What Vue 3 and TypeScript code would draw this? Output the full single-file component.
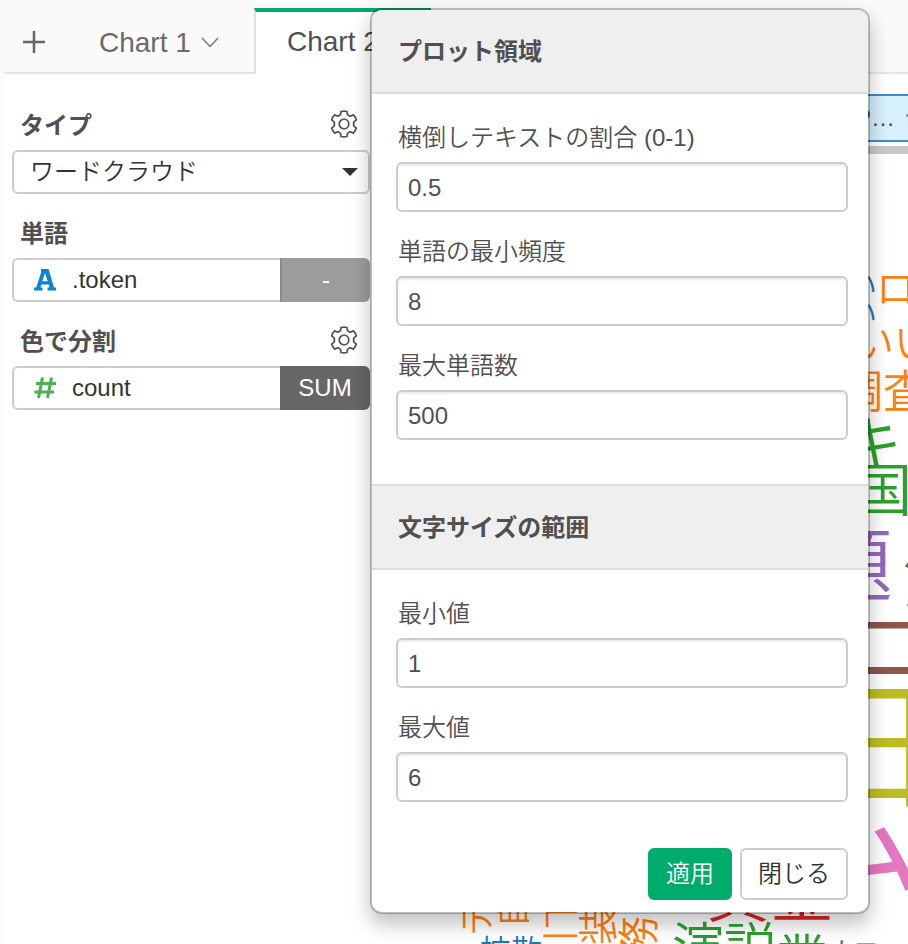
<script setup lang="ts">
import { ref } from 'vue'

interface Word {
  text: string
  x: number
  y: number
  size: number
  color: string
  turned?: boolean
}

interface Field {
  id: string
  label: string
  value: string
}

const chartType = ref('wordcloud')

const plotFields = ref<Field[]>([
  { id: 'rotate-ratio', label: '横倒しテキストの割合 (0-1)', value: '0.5' },
  { id: 'min-freq', label: '単語の最小頻度', value: '8' },
  { id: 'max-words', label: '最大単語数', value: '500' },
])

const sizeFields = ref<Field[]>([
  { id: 'size-min', label: '最小値', value: '1' },
  { id: 'size-max', label: '最大値', value: '6' },
])

const blue = '#1f77b4'
const orange = '#ff7f0e'
const green = '#2ca02c'
const purple = '#9467bd'
const brown = '#8c564b'
const olive = '#bcbd22'
const pink = '#e377c2'
const red = '#d62728'

// Baseline positions inside the chart canvas.
const words: Word[] = [
  { text: 'い', x: 477, y: 142, size: 30, color: blue },
  { text: 'い', x: 477, y: 170, size: 30, color: blue },
  { text: 'ロ', x: 506, y: 149, size: 40, color: orange },
  { text: 'いい', x: 484, y: 203, size: 40, color: orange },
  { text: '調査', x: 468, y: 254, size: 45, color: orange },
  { text: 'キ', x: 472, y: 312, size: 60, color: green },
  { text: '国', x: 484, y: 357, size: 58, color: green },
  { text: '題', x: 443, y: 440, size: 80, color: purple },
  { text: '済', x: 532, y: 449, size: 72, color: brown },
  { text: 'ニ', x: 476, y: 526, size: 90, color: brown },
  { text: '日', x: 430, y: 643, size: 140, color: olive },
  { text: 'ム', x: 412, y: 732, size: 144, color: pink },
  { text: 'テ', x: 120, y: 782, size: 36, color: orange, turned: true },
  { text: '自', x: 156, y: 774, size: 36, color: orange, turned: true },
  { text: '引下', x: 204, y: 811, size: 36, color: orange, turned: true },
  { text: '装', x: 243, y: 791, size: 40, color: orange, turned: true },
  { text: '務', x: 284, y: 804, size: 42, color: orange, turned: true },
  { text: '拡散', x: 110, y: 808, size: 31, color: blue },
  { text: '資金', x: 336, y: 762, size: 64, color: red },
  { text: '演説', x: 302, y: 812, size: 52, color: green },
  { text: '業', x: 406, y: 824, size: 52, color: green },
  { text: 'た', x: 460, y: 810, size: 30, color: blue },
  { text: '一', x: 486, y: 798, size: 20, color: pink },
]
</script>

<template>
  <div class="page">
    <header class="tabs">
      <button class="add" type="button" aria-label="+">
        <svg width="22" height="22" viewBox="0 0 22 22"><path d="M11 0v22M0 11h22" stroke="#666" stroke-width="2.500" /></svg>
      </button>
      <button class="tab" type="button">
        <span>Chart 1</span>
        <svg width="18" height="12" viewBox="0 0 18 12"><path d="M1 1l8 8.500 8-8.500" fill="none" stroke="#777" stroke-width="1.500" /></svg>
      </button>
      <button class="tab active" type="button"><span>Chart 2</span></button>
      <div class="rest"></div>
    </header>

    <div class="body">
      <aside class="side">
        <div class="title">
          <label for="chart-type">タイプ</label>
          <button class="gear" type="button" aria-label="タイプ">
            <svg width="28" height="28" viewBox="0 0 28 28"><use href="#gear" /></svg>
          </button>
        </div>
        <div class="pick">
          <select id="chart-type" v-model="chartType">
            <option value="wordcloud">ワードクラウド</option>
          </select>
          <svg class="caret" width="16" height="8" viewBox="0 0 16 8"><path d="M0 0h16L8 8z" fill="#333" /></svg>
        </div>

        <div class="title"><h2>単語</h2></div>
        <div class="column">
          <button class="name" type="button">
            <svg width="22" height="22" viewBox="0 0 22 22">
              <path d="M7 0h7.500L20 18.500h2V21.500h-8.500V18.500h2L14.700 15.500H7.300L6.500 18.500h2V21.500H0V18.500H2.200L7.400 2.800H7zM8.300 12.300h5.400L11 4z" fill="#0a84d6" fill-rule="evenodd" />
            </svg>
            <span>.token</span>
          </button>
          <button class="agg muted" type="button">-</button>
        </div>

        <div class="title">
          <h2>色で分割</h2>
          <button class="gear" type="button" aria-label="色で分割">
            <svg width="28" height="28" viewBox="0 0 28 28">
              <path id="gear" d="M11 1.500q3-.8 6 0l.5 3.300 2.600 1.500 3.200-1.400q2.200 2 3 5l-2.600 2.200v3.800l2.600 2.200q-.8 3-3 5l-3.200-1.400-2.600 1.500-.5 3.300q-3 .8-6 0l-.5-3.300-2.600-1.500-3.200 1.400q-2.200-2-3-5l2.600-2.200v-3.800L1.700 9.900q.8-3 3-5l3.200 1.400 2.600-1.500zM14 9.200a4.800 4.800 0 1 0 0 9.600 4.800 4.800 0 0 0 0-9.600z" fill="none" stroke="#555" stroke-width="1.800" stroke-linejoin="round" />
            </svg>
          </button>
        </div>
        <div class="column">
          <button class="name" type="button">
            <svg width="22" height="22" viewBox="0 0 22 22"><path d="M8.500 0.500L4.500 21M17.500 0.500l-4 20.500M2 6.500h20M.5 15H20" fill="none" stroke="#4caf50" stroke-width="3" /></svg>
            <span>count</span>
          </button>
          <button class="agg" type="button">SUM</button>
        </div>
      </aside>

      <main class="chart">
        <div class="pin"><span>P…</span><span>↑</span></div>
        <div class="bar"></div>
        <svg class="cloud" role="img">
          <text
            v-for="(w, i) in words"
            :key="i"
            :transform="`translate(${w.x} ${w.y})${w.turned ? ' rotate(-90)' : ''}`"
            :font-size="w.size"
            :fill="w.color"
          >{{ w.text }}</text>
        </svg>
      </main>
    </div>

    <form class="dialog" @submit.prevent>
      <h3>プロット領域</h3>
      <div class="fields">
        <div v-for="f in plotFields" :key="f.id" class="field">
          <label :for="f.id">{{ f.label }}</label>
          <input :id="f.id" v-model="f.value" type="text" />
        </div>
      </div>
      <h3 class="second">文字サイズの範囲</h3>
      <div class="fields">
        <div v-for="f in sizeFields" :key="f.id" class="field">
          <label :for="f.id">{{ f.label }}</label>
          <input :id="f.id" v-model="f.value" type="text" />
        </div>
      </div>
      <div class="actions">
        <button class="apply" type="submit">適用</button>
        <button class="close" type="button">閉じる</button>
      </div>
    </form>
  </div>
</template>

<style>
body {
  background: #fafafa;
}
</style>

<style scoped>
.page,
.page * {
  box-sizing: border-box;
}
.page {
  position: relative;
  display: flex;
  flex-direction: column;
  height: 100vh;
  min-height: 926px;
  padding-left: 4px;
  overflow: hidden;
  color: #505050;
  font-family: 'Liberation Sans', 'Noto Sans CJK JP', sans-serif;
  font-size: 24px;
}
button,
input,
select {
  font: inherit;
  color: inherit;
  margin: 0;
}
button {
  display: flex;
  align-items: center;
  border: 0;
  padding: 0;
  background: none;
}
h2,
h3 {
  margin: 0;
  font-size: 24px;
}
.tabs {
  display: flex;
  height: 74px;
  padding-top: 8px;
}
.add {
  width: 60px;
  padding-top: 4px;
  justify-content: center;
  border-bottom: 2px solid #e6e6e6;
}
.tab {
  gap: 10px;
  width: 190px;
  padding: 6px 0 0 35px;
  font-size: 28px;
  color: #6a6a6a;
  border-bottom: 2px solid #e6e6e6;
}
.tab.active {
  width: 177px;
  padding: 0 0 2px 31px;
  color: #505050;
  background: #fff;
  border-left: 2px solid #e0e0e0;
  border-top: 4px solid #00ac6b;
  border-bottom: 0;
}
.rest {
  flex: 1;
  border-bottom: 2px solid #e6e6e6;
}
.body {
  flex: 1;
  display: flex;
  min-height: 0;
  background: #fff;
}
.side {
  width: 366px;
  padding: 24px 0 0 8px;
}
.title {
  display: flex;
  align-items: center;
  justify-content: space-between;
  height: 52px;
  padding: 0 12px 0 8px;
  font-weight: 700;
  line-height: 32px;
}
.title label,
.title h2 {
  padding-top: 4px;
}
.pick {
  position: relative;
  margin-bottom: 12px;
}
.pick select {
  display: block;
  appearance: none;
  width: 100%;
  height: 44px;
  padding: 0 40px 2px 16px;
  color: #333;
  font-weight: 350;
  background: #fff;
  border: 2px solid #ccc;
  border-radius: 6px;
}
.caret {
  position: absolute;
  right: 12px;
  top: 18px;
}
.column {
  display: flex;
  height: 44px;
  margin-bottom: 12px;
}
.name {
  flex: 1;
  gap: 16px;
  padding-left: 20px;
  color: #333;
  background: #fff;
  border: 2px solid #ccc;
  border-right: 0;
  border-radius: 6px 0 0 6px;
}
.agg {
  width: 90px;
  justify-content: center;
  color: #fff;
  background: #666;
  border-radius: 0 6px 6px 0;
}
.agg.muted {
  background: #9c9c9c;
  border-left: 2px solid #8a8a8a;
}
.chart {
  flex: 1;
  display: flex;
  flex-direction: column;
  min-width: 0;
  padding-top: 20px;
  overflow: hidden;
}
.pin {
  display: flex;
  gap: 8px;
  height: 48px;
  margin-left: 4px;
  padding-left: 479px;
  align-items: center;
  color: #444;
  white-space: nowrap;
  background: #d6f0fc;
  border: 2px solid #428bca;
  border-right: 0;
}
.bar {
  height: 8px;
  margin: 4px 0 0 4px;
  background: #c9c9c9;
}
.cloud {
  flex: 1;
  width: 100%;
  min-height: 0;
  font-family: 'Noto Sans CJK JP', sans-serif;
  font-weight: 350;
}
.dialog {
  position: absolute;
  left: 370px;
  top: 8px;
  width: 500px;
  overflow: hidden;
  background: #fff;
  background-clip: padding-box;
  border: 2px solid rgba(0, 0, 0, 0.25);
  border-radius: 12px;
  box-shadow: 0 10px 20px rgba(0, 0, 0, 0.25);
}
.dialog h3 {
  height: 84px;
  padding-left: 26px;
  line-height: 84px;
  background: #efefef;
  border-bottom: 2px solid #ddd;
}
.dialog h3.second {
  height: 86px;
  margin-top: 44px;
  border-top: 2px solid #ddd;
}
.fields {
  display: flex;
  flex-direction: column;
  gap: 22px;
  padding: 26px 20px 0 24px;
}
.field {
  display: flex;
  flex-direction: column;
  gap: 6px;
}
.field label {
  padding-left: 2px;
  line-height: 36px;
  font-weight: 350;
}
.field input {
  width: 100%;
  height: 50px;
  padding: 2px 10px 0;
  background: #fff;
  border: 2px solid #ccc;
  border-radius: 6px;
  box-shadow: inset 0 2px 2px rgba(0, 0, 0, 0.08);
}
.actions {
  display: flex;
  justify-content: flex-end;
  gap: 8px;
  padding: 46px 20px 12px;
}
.actions button {
  height: 52px;
  padding: 0 16px 6px;
  font-weight: 350;
  border: 2px solid #ccc;
  border-radius: 6px;
}
.actions .apply {
  color: #fff;
  background: #00ac6b;
  border-color: #00ac6b;
}
.actions .close {
  color: #333;
  background: #fff;
}
</style>
